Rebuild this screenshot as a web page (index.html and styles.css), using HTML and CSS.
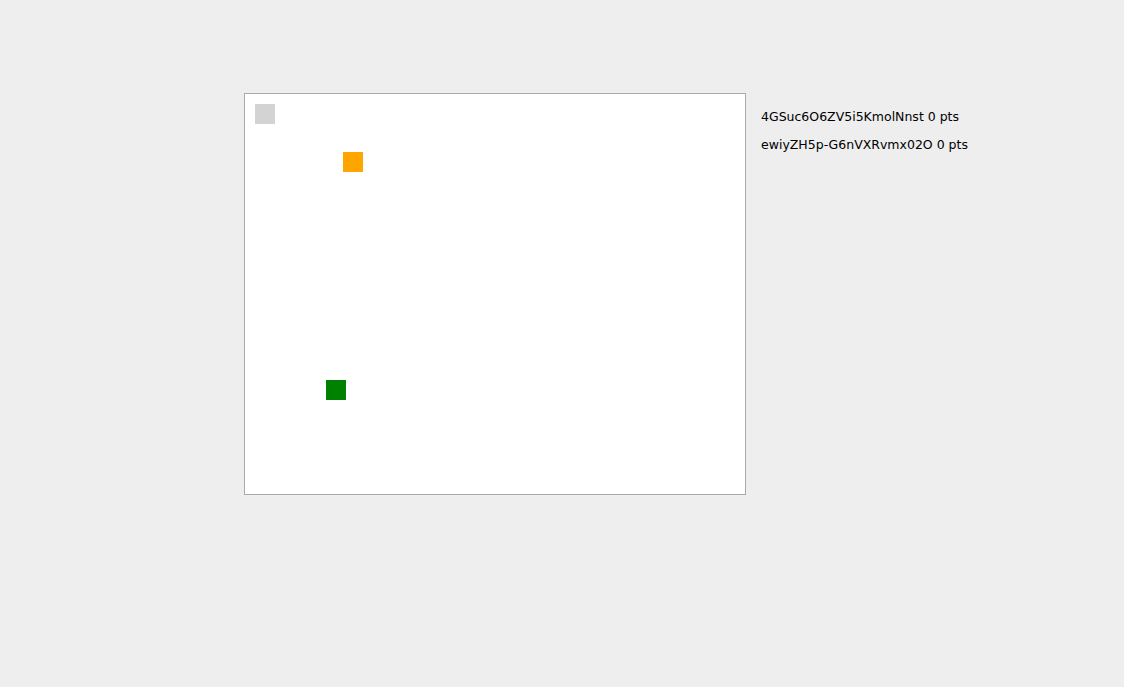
FILE: index.html
```html
<!DOCTYPE html>
<html>
<head>
<meta charset="utf-8">
<link rel="stylesheet" href="styles.css">
</head>
<body>
<div class="layout">
  <div class="board">
    <div class="cell gray" style="left:10px;top:10px"></div>
    <div class="cell orange" style="left:98px;top:58px"></div>
    <div class="cell green" style="left:81px;top:286px"></div>
  </div>
  <div class="scores">
    <div class="score">4GSuc6O6ZV5i5KmolNnst 0 pts</div>
    <div class="score">ewiyZH5p-G6nVXRvmx02O 0 pts</div>
  </div>
</div>
</body>
</html>
```
FILE: styles.css
```css
html, body {
  margin: 0;
  padding: 0;
  background: #eeeeee;
}
body {
  font-family: "DejaVu Sans", Verdana, sans-serif;
  font-size: 12.5px;
  color: #000;
}
.layout {
  display: flex;
  align-items: flex-start;
  padding: 93px 0 0 244px;
}
.board {
  position: relative;
  width: 500px;
  height: 400px;
  background: #fff;
  border: 1px solid #aaaaaa;
  flex: none;
}
.cell {
  position: absolute;
  width: 20px;
  height: 20px;
}
.gray { background: #d3d3d3; }
.orange { background: #ffa500; }
.green { background: #008000; }
.scores {
  margin-left: 15px;
  padding-top: 10px;
}
.score {
  line-height: 28px;
  white-space: nowrap;
}
```
